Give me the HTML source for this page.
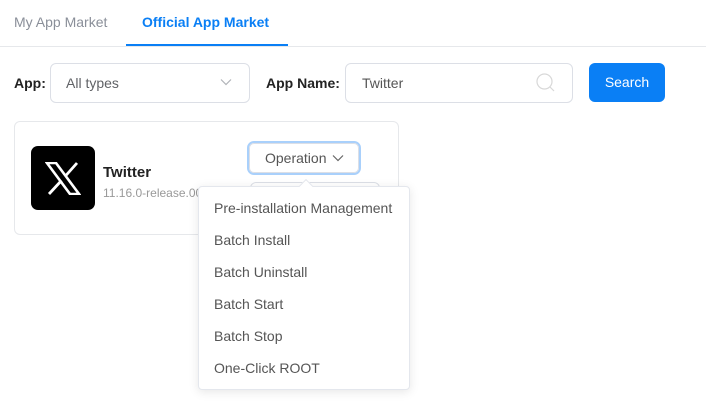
<!DOCTYPE html>
<html><head><style>
*{box-sizing:border-box;margin:0;padding:0}
body{width:706px;height:401px;background:#fff;font-family:"Liberation Sans",sans-serif;position:relative;overflow:hidden;color:#333}
.a{position:absolute}
</style></head><body>
<div class="a" style="left:14px;top:14px;font-size:14px;color:#8a8f99">My App Market</div>
<div class="a" style="left:142px;top:14px;font-size:14px;color:#0a7ff5;font-weight:bold">Official App Market</div>
<div class="a" style="left:0;top:46px;width:706px;height:1px;background:#e6e8eb"></div>
<div class="a" style="left:126px;top:44px;width:162px;height:2px;background:#0a7ff5"></div>

<div class="a" style="left:14px;top:75px;font-size:14px;font-weight:bold;color:#222">App:</div>
<div class="a" style="left:50px;top:63px;width:200px;height:40px;border:1px solid #dcdfe6;border-radius:6px"></div>
<div class="a" style="left:66px;top:75px;font-size:14px;color:#606266">All types</div>
<svg class="a" style="left:220px;top:78px" width="12" height="8"><path d="M1 1.5L6 6.5L11 1.5" fill="none" stroke="#b0b3b8" stroke-width="1.2"/></svg>

<div class="a" style="left:266px;top:75px;font-size:14px;font-weight:bold;color:#222">App Name:</div>
<div class="a" style="left:345px;top:63px;width:228px;height:40px;border:1px solid #dcdfe6;border-radius:6px"></div>
<div class="a" style="left:362px;top:75px;font-size:14px;color:#555">Twitter</div>
<svg class="a" style="left:535px;top:72px" width="22" height="22"><circle cx="9.5" cy="9.5" r="7.5" fill="none" stroke="#d8d8d8" stroke-width="1.2"/><path d="M15 15L19 19" stroke="#d8d8d8" stroke-width="1.2"/></svg>
<div class="a" style="left:589px;top:63px;width:76px;height:39px;background:#0a7ff5;border-radius:6px;color:#fff;font-size:14px;text-align:center;line-height:39px">Search</div>

<div class="a" style="left:14px;top:121px;width:385px;height:114px;border:1px solid #e6e8eb;border-radius:6px"></div>
<div class="a" style="left:31px;top:146px;width:64px;height:64px;background:#000;border-radius:7px"></div>
<svg class="a" style="left:45px;top:162px" width="36" height="33"><path d="M2 1h9l23 31h-9z" fill="none" stroke="#fff" stroke-width="2.6"/><path d="M32 1L20 14.5M4 32l12.5-13.5" stroke="#fff" stroke-width="2.8"/></svg>
<div class="a" style="left:103px;top:164px;font-size:15px;font-weight:bold;color:#222">Twitter</div>
<div class="a" style="left:103px;top:186px;font-size:12px;color:#999">11.16.0-release.00</div>

<div class="a" style="left:250px;top:182px;width:130px;height:30px;border:1px solid #dcdfe6;border-radius:6px"></div>
<div class="a" style="left:247px;top:141px;width:114px;height:34px;border:2px solid #a9d0fb;border-radius:7px;background:#fff"></div>
<div class="a" style="left:249px;top:143px;width:110px;height:30px;border:1px solid #dcdfe6;border-radius:5px;font-size:14px;color:#555;line-height:28px;padding-left:15px">Operation</div>
<svg class="a" style="left:332px;top:154px" width="12" height="8"><path d="M1 1.5L6 6.5L11 1.5" fill="none" stroke="#666" stroke-width="1.2"/></svg>

<div class="a" style="left:198px;top:186px;width:212px;height:204px;background:#fff;border:1px solid #e4e7ed;border-radius:4px;box-shadow:0 2px 10px rgba(0,0,0,.1)"></div>
<div class="a" style="left:301px;top:181px;width:10px;height:10px;background:#fff;transform:rotate(45deg);border-left:1px solid #e4e7ed;border-top:1px solid #e4e7ed"></div>
<div class="a" style="left:214px;top:192px;font-size:14px;color:#555;line-height:32px">
Pre-installation Management<br>Batch Install<br>Batch Uninstall<br>Batch Start<br>Batch Stop<br>One-Click ROOT</div>
</body></html>
